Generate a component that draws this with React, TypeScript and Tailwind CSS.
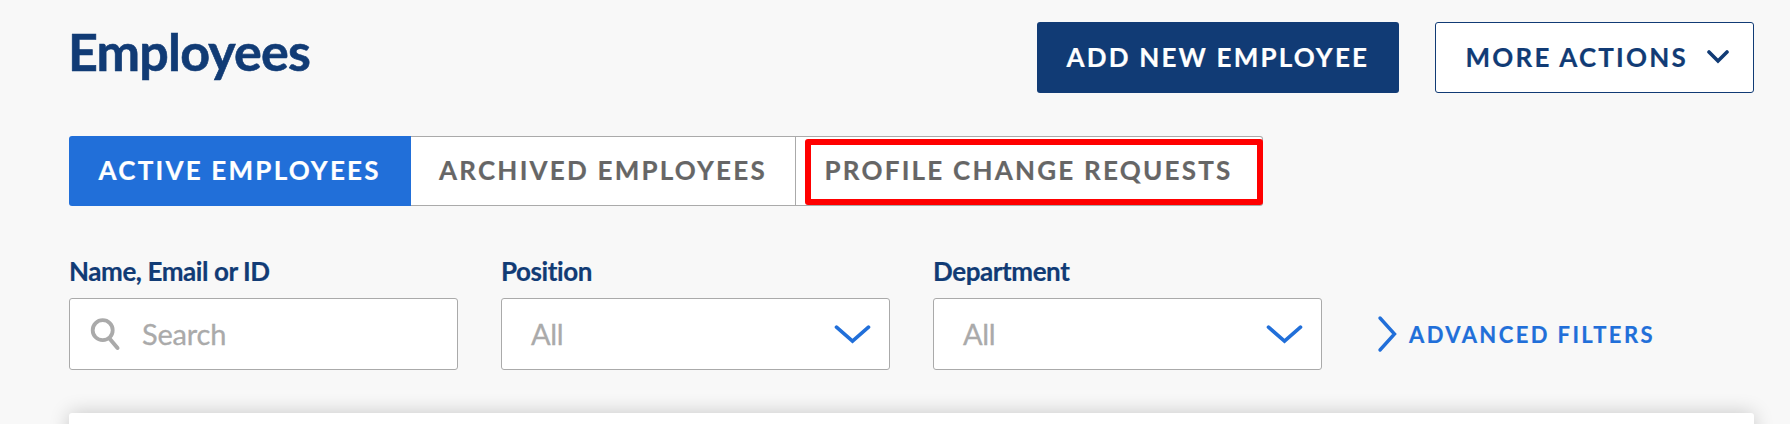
import type { ReactNode } from "react"

function Field({ label, children }: { label: string; children: ReactNode }) {
  return (
    <div className="w-[389px]">
      <label className="-mt-px block h-[43px] text-[26px] leading-[32px] font-bold tracking-[-0.42px] text-[#113b75] [-webkit-text-stroke:0.2px]">
        {label}
      </label>
      <div className="flex h-[72px] items-center rounded-[3px] border border-[#aaaaaa] bg-white">
        {children}
      </div>
    </div>
  )
}

function Select() {
  return (
    <>
      <span className="ml-[29px] flex-1 text-[29px] leading-[36px] tracking-[-0.3px] text-[#aaaaaa] [-webkit-text-stroke:0.3px]">All</span>
      <svg className="mr-[18px] h-[20px] w-[38px]" viewBox="0 0 38 20" fill="none">
        <path d="M3.5 3.2 L19.5 17.2 L35.5 3.2" stroke="#216fd9" strokeWidth="3.6" strokeLinecap="round" />
      </svg>
    </>
  )
}

export default function App() {
  return (
    <div className="h-[424px] w-[1790px] overflow-hidden bg-[#f8f8f8] pt-[22px] pr-[36px] pl-[69px] font-['Lato',sans-serif]">
      <header className="flex h-[114px] items-start">
        <h1 className="-mt-[2px] -ml-px flex-1 text-[52px] leading-[62px] font-bold tracking-[-0.8px] text-[#113b75] [-webkit-text-stroke:0.6px]">
          Employees
        </h1>
        <button className="flex h-[71px] w-[362px] items-center rounded-[3px] bg-[#113b75] pl-[29.5px] text-[26px] font-bold tracking-[2.2px] whitespace-nowrap text-white [-webkit-text-stroke:0.2px]">
          ADD NEW EMPLOYEE
        </button>
        <button className="ml-9 flex h-[71px] w-[319px] items-center rounded-[3px] border border-[#113b75] bg-white pl-[29.5px] text-[26px] font-bold tracking-[2.2px] whitespace-nowrap text-[#113b75] [-webkit-text-stroke:0.2px]">
          MORE ACTIONS
          <svg className="ml-[17px] h-[16px] w-[26px]" viewBox="0 0 26 16" fill="none">
            <path d="M4 2 L13 11 L22 2" stroke="#113b75" strokeWidth="3.6" strokeLinecap="round" />
          </svg>
        </button>
      </header>

      <nav className="flex h-[70px] w-[1194px] text-[26px] font-bold tracking-[2.22px] whitespace-nowrap text-[#666666] [-webkit-text-stroke:0.2px]">
        <div className="flex w-[342px] items-center rounded-l-[3px] bg-[#216fd9] pb-[2px] pl-[29.5px] text-white">
          ACTIVE EMPLOYEES
        </div>
        <div className="flex w-[385px] items-center border-y border-r border-[#aaaaaa] bg-white pb-[2px] pl-[28px]">
          ARCHIVED EMPLOYEES
        </div>
        <div className="relative flex w-[467px] items-center rounded-r-[3px] border-y border-r border-[#aaaaaa] bg-white pb-[2px] pl-[28.5px]">
          PROFILE CHANGE REQUESTS
          <div className="absolute top-[2px] -right-px h-[66px] w-[458px] rounded-[3px] border-6 border-[#ff0000]" />
        </div>
      </nav>

      <section className="mt-[50px] flex gap-[43px]">
        <Field label="Name, Email or ID">
          <svg className="ml-[19px] h-[36px] w-[34px]" viewBox="0 0 34 36" fill="none" stroke="#aaaaaa">
            <circle cx="13.7" cy="14.2" r="10" strokeWidth="3.8" />
            <path d="M20.5 22.5 L28.5 32" strokeWidth="4" strokeLinecap="round" />
          </svg>
          <span className="ml-[19px] text-[29px] leading-[36px] tracking-[-0.2px] text-[#aaaaaa] [-webkit-text-stroke:0.3px]">Search</span>
        </Field>
        <Field label="Position">
          <Select />
        </Field>
        <Field label="Department">
          <Select />
        </Field>
        <a className="mt-[42px] ml-[10px] flex h-[72px] items-center text-[22px] font-bold tracking-[2.4px] whitespace-nowrap text-[#216fd9] [-webkit-text-stroke:0.2px]">
          <svg className="h-[38px] w-[24px]" viewBox="0 0 24 38" fill="none">
            <path d="M5 3 L19.5 19 L5 35" stroke="#216fd9" strokeWidth="3.4" strokeLinecap="round" />
          </svg>
          <span className="ml-[10px]">ADVANCED FILTERS</span>
        </a>
      </section>

      <main className="mt-[43px] h-[60px] w-[1685px] rounded-[3px] bg-white shadow-[0_0_20px_rgba(0,0,0,0.2)]" />
    </div>
  )
}
